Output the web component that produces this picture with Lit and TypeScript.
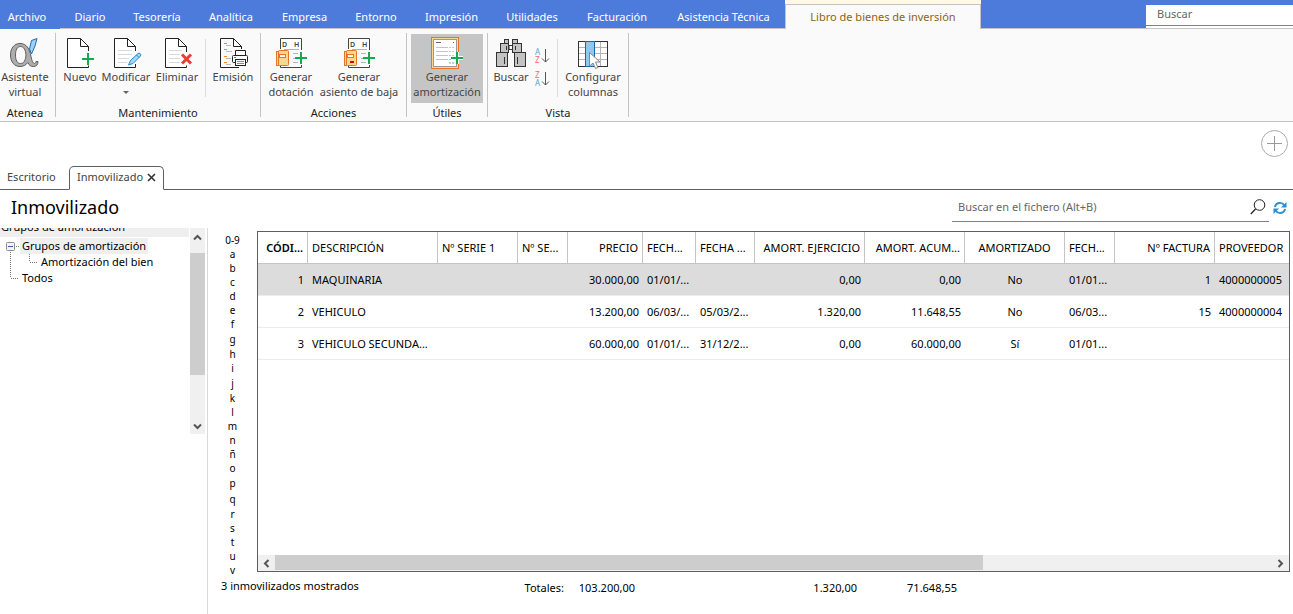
import { LitElement, html, css, svg, nothing } from "lit";
import { customElement, state } from "lit/decorators.js";
import { classMap } from "lit/directives/class-map.js";
import { styleMap } from "lit/directives/style-map.js";

const plus = (x: number, y: number, halo = false) => svg`
  ${halo ? svg`<path d="M${x - 6} ${y}H${x + 6}M${x} ${y - 6}V${y + 6}" stroke="#fafafa" stroke-width="4"/>` : nothing}
  <path d="M${x - 6} ${y}H${x + 6}M${x} ${y - 6}V${y + 6}" stroke="#16a951" stroke-width="2"/>`;

const ledger = svg`
  <path d="M7.5 13V2.5H28.5V14M28.5 29V31.5H7.5V30" stroke="#444" fill="#fff"/>
  <path d="M11 13.5H26" stroke="#b5b5b5"/>
  <path d="M20 17.5H25M20 22.5H22M20 26.5H25" stroke="#b5b5b5"/>
  <text x="9" y="11" class="dh">D</text><text x="21" y="11" class="dh">H</text>
  <rect x="3.5" y="15.5" width="2" height="14" fill="#fbd88f" stroke="#e77325"/>
  <rect x="5.5" y="14.5" width="10" height="15" rx="1" fill="#fbd88f" stroke="#e77325"/>
  <rect x="6.5" y="18.5" width="6" height="3" fill="#fff" stroke="#e77325"/>`;

const icons: Record<string, unknown> = {
  alpha: svg`
    <path d="M24.500 4.500L30 2.500L28 10L24.500 18L22.500 13Z" fill="#9fd0f5" stroke="#1c6fb5"/>
    <path fill-rule="evenodd" d="M13 7.500C7 7.500 3.500 12.500 3.500 19C3.500 26 7.500 30.500 13 30.500C16.500 30.500 19 29 20.800 26.500C22 29.500 24 30.500 26.500 30.500C29.500 30.500 31 28.500 31 25.500L29 25.500C28.800 27 28.300 27.500 27.500 27.500C25.800 27.500 25 25 24 20.500C22.500 12.500 19.500 7.500 13 7.500ZM13.500 10.500C17 10.500 18.500 14 19 19C18.500 24.500 17 27.500 13.500 27.500C10 27.500 8.500 24 8.500 19C8.500 14 10 10.500 13.500 10.500Z" fill="#adadad" stroke="#5e5e5e"/>`,
  nuevo: svg`
    <path d="M26.500 15V10.500L18.500 2.500H5.500V31.500H26.500V29.500" stroke="#222" fill="#fff"/>
    <path d="M18.500 2.500V10.500H26.500" stroke="#222" fill="none"/>${plus(26, 23)}`,
  modificar: svg`
    <path d="M27.500 15V10.500L19.500 2.500H6.500V31.500H27.500V28" stroke="#222" fill="#fff"/>
    <path d="M19.500 2.500V10.500H27.500" stroke="#222" fill="none"/>
    <path d="M10 14.500H24M10 18.500H24M10 22.500H21M10 26.500H19" stroke="#d9d9d9"/>
    <path d="M20.500 29L22.500 24.500L30 17.500C31.500 16.500 33.500 18 32.500 20L25 27.500Z" fill="#a9d6f5" stroke="#2787c9"/>
    <path d="M28.500 19L31 21.500" stroke="#2787c9"/>`,
  eliminar: svg`
    <path d="M27.500 16V10.500L19.500 2.500H6.500V31.500H27.500V29.500" stroke="#222" fill="#fff"/>
    <path d="M19.500 2.500V10.500H27.500" stroke="#222" fill="none"/>
    <path d="M10 14.500H23M10 18.500H21M10 22.500H21M10 26.500H21" stroke="#d9d9d9"/>
    <path d="M23 18.500L32 27.500M32 18.500L23 27.500" stroke="#ee3b35" stroke-width="3"/>`,
  emision: svg`
    <path d="M26.500 13V10.500L18.500 2.500H5.500V31.500H24" stroke="#222" fill="none"/>
    <path d="M18.500 2.500V10.500H26.500" stroke="#222" fill="none"/>
    <path d="M9 7.500H12M9 13.500H12M9 20.500H12M9 26.500H12" stroke="#f08a1c"/>
    <path d="M11 9.500H16M11 15.500H17M11 22.500H16M11 28.500H16" stroke="#bbb"/>
    <path d="M20.500 19.500V14.500H30.500V19.500" stroke="#222" fill="#fff"/>
    <rect x="17.500" y="19.500" width="15" height="7" rx="1" fill="#fff" stroke="#222"/>
    <path d="M19 21.500H21" stroke="#2787c9"/>
    <rect x="20.500" y="23.500" width="10" height="6" fill="#fff" stroke="#222"/>
    <path d="M22 25.500H29M22 27.500H29" stroke="#888"/>`,
  dotacion: svg`${ledger}${plus(28, 22)}`,
  baja: svg`${ledger}<rect x="9" y="25" width="4" height="2" fill="#d80000"/>${plus(28, 22)}`,
  amortizacion: svg`
    <rect x="2.500" y="1.500" width="27" height="31" fill="#fbd88f" stroke="#e77325"/>
    <rect x="4.500" y="3.500" width="23" height="27" fill="#fff" stroke="#999"/>
    <path d="M7 6.500H12M24 6.500H25" stroke="#666"/>
    <path d="M7 11.500H25M7 15.500H25M7 19.500H25M7 23.500H22" stroke="#c4c4c4" stroke-dasharray="12 1 2 1"/>
    <path d="M20 27H22M23 27H25" stroke="#ccc" stroke-width="2"/>${plus(28, 22, true)}`,
  buscar: svg`
    <g fill="#c3c3c3" stroke="#333">
      <rect x="16" y="9.500" width="4" height="4" fill="#fafafa"/>
      <rect x="11.500" y="3.500" width="4" height="4"/><rect x="19.500" y="3.500" width="5" height="4"/>
      <rect x="7.500" y="7.500" width="8" height="9"/><rect x="19.500" y="7.500" width="9" height="9"/>
      <rect x="3.500" y="16.500" width="11" height="14"/><rect x="21.500" y="16.500" width="11" height="14"/>
      <path d="M13.500 10V14M22.500 10V14M11.500 21V28M24.500 21V28"/>
    </g>`,
  columnas: svg`
    <rect x="3.500" y="5.500" width="29" height="25" fill="#fff" stroke="#333"/>
    <path d="M4 11.500H32M4 17.500H32M4 23.500H32M25.500 6V30" stroke="#b5b5b5"/>
    <rect x="10.500" y="5.500" width="9" height="25" fill="#92c8ee" stroke="#1768ad"/>
    <path d="M14.500 16.500V30L18 27L20.500 32.500L23 31.500L20.500 26H25Z" fill="#fff" stroke="#888"/>`,
};

const ribbonIcon = (name: string) =>
  html`<svg class="icon" width="36" height="33" viewBox="0 0 36 33" fill="none" aria-hidden="true">${icons[name]}</svg>`;

interface Command { icon: string; lines: string[]; width: number; menu?: boolean; active?: boolean; }
interface Group { label: string; width: number; items: (Command | "rule" | "sort")[]; }

const MENU = [
  ["Archivo", 60], ["Diario", 60], ["Tesorería", 74], ["Analítica", 74], ["Empresa", 73], ["Entorno", 70],
  ["Impresión", 81], ["Utilidades", 80], ["Facturación", 90], ["Asistencia Técnica", 123],
] as const;

const GROUPS: Group[] = [
  { label: "Atenea", width: 55, items: [{ icon: "alpha", lines: ["Asistente", "virtual"], width: 50 }] },
  {
    label: "Mantenimiento", width: 204, items: [
      { icon: "nuevo", lines: ["Nuevo"], width: 40 },
      { icon: "modificar", lines: ["Modificar"], width: 52, menu: true },
      { icon: "eliminar", lines: ["Eliminar"], width: 50 },
      "rule",
      { icon: "emision", lines: ["Emisión"], width: 46 },
    ],
  },
  {
    label: "Acciones", width: 145, items: [
      { icon: "dotacion", lines: ["Generar", "dotación"], width: 52 },
      { icon: "baja", lines: ["Generar", "asiento de baja"], width: 84 },
    ],
  },
  { label: "Útiles", width: 80, items: [{ icon: "amortizacion", lines: ["Generar", "amortización"], width: 72, active: true }] },
  {
    label: "Vista", width: 140, items: [
      { icon: "buscar", lines: ["Buscar"], width: 38 },
      "sort",
      "rule",
      { icon: "columnas", lines: ["Configurar", "columnas"], width: 62 },
    ],
  },
];

const COLUMNS: { title: string; width?: number; align: "left" | "right" | "center"; strong?: boolean }[] = [
  { title: "CÓDI...", width: 50, align: "right", strong: true },
  { title: "DESCRIPCIÓN", width: 130, align: "left" },
  { title: "Nº SERIE 1", width: 80, align: "left" },
  { title: "Nº SE...", width: 50, align: "left" },
  { title: "PRECIO", width: 75, align: "right" },
  { title: "FECH...", width: 53, align: "left" },
  { title: "FECHA ...", width: 59, align: "left" },
  { title: "AMORT. EJERCICIO", width: 110, align: "right" },
  { title: "AMORT. ACUM...", width: 100, align: "right" },
  { title: "AMORTIZADO", width: 100, align: "center" },
  { title: "FECH...", width: 50, align: "left" },
  { title: "Nº FACTURA", width: 100, align: "right" },
  { title: "PROVEEDOR", align: "left" },
];

const ROWS = [
  ["1", "MAQUINARIA", "", "", "30.000,00", "01/01/...", "", "0,00", "0,00", "No", "01/01...", "1", "4000000005"],
  ["2", "VEHICULO", "", "", "13.200,00", "06/03/...", "05/03/2...", "1.320,00", "11.648,55", "No", "06/03...", "15", "4000000004"],
  ["3", "VEHICULO SECUNDA...", "", "", "60.000,00", "01/01/...", "31/12/2...", "0,00", "60.000,00", "Sí", "01/01...", "", ""],
];

const INDEX = ["0-9", ..."abcdefghijklmnñopqrstuv"];

@customElement("app-root")
export class AppRoot extends LitElement {
  @state() private selected = 0;

  static styles = css`
    :host { display: flex; flex-direction: column; height: 100vh; overflow: hidden; background: #fff; color: #000; font: 11px/16px "Noto Sans", "Open Sans", sans-serif; }
    * { box-sizing: border-box; }
    button, input { font: inherit; color: inherit; border: 0; padding: 0; margin: 0; background: none; border-radius: 0; outline: 0; }
    button { cursor: pointer; white-space: nowrap; }
    svg { display: block; flex: none; overflow: visible; }

    .menubar { flex: none; display: flex; height: 29px; background: #4d7bdb; }
    .menu { color: #fff; border-bottom: 1px solid #c4c4c4; padding-top: 5px; }
    .menu:first-child { border-bottom-color: #4d7bdb; padding-right: 6px; }
    .context { width: 196px; border-top: 4px solid #fff8e4; background: #fafafa; display: flex; }
    .context button { flex: 1; border: 1px solid #c4c4c4; border-bottom: 0; color: #8a6414; }
    .fill { flex: 1; border-bottom: 1px solid #c4c4c4; }
    .global { width: 147px; margin-top: 5px; background: #fff; border-bottom: 1px solid #c4c4c4; }
    .global input { display: block; width: 100%; height: 21px; border-bottom: 1px solid #808080; padding: 0 11px 3px; }
    input::placeholder { color: #666; opacity: 1; }

    .ribbon { flex: none; display: flex; height: 93px; background: #fafafa; border-bottom: 1px solid #c4c4c4; color: #444; }
    .group { display: flex; flex-direction: column; padding: 5px 4px 0; }
    .group:first-child { padding: 5px 5px 0 0; }
    .group h2 { margin: 0; font: inherit; line-height: 17px; text-align: center; color: #222; }
    .commands { display: flex; height: 71px; }
    .edge { width: 1px; margin: 4px 0; background: #c4c4c4; }
    .rule { width: 1px; margin: 5px 4px 7px 3px; background: #dcdcdc; }
    .command { display: flex; flex-direction: column; align-items: center; height: 69px; padding-top: 2px; line-height: 15px; }
    .command.active { background: #c5c5c5; }
    .drop { margin-top: 7px; }
    .dh { font: 600 7px "Noto Sans", sans-serif; fill: #444; stroke: none; }
    .sort { width: 24px; display: flex; flex-direction: column; align-items: center; gap: 7px; padding-top: 14px; }
    .sort text { font: 8px "Noto Sans", sans-serif; }

    .tabs { flex: none; display: flex; height: 68px; padding-right: 5px; border-bottom: 1px solid #5f5f5f; align-items: flex-end; color: #444; }
    .tab { height: 24px; padding: 0 7px 2px; margin-bottom: -1px; display: flex; align-items: center; gap: 4px; }
    .tab.home { width: 69px; }
    .tab.current { width: 95px; border: 1px solid #5f5f5f; border-bottom-color: #fff; border-radius: 5px 5px 0 0; background: #fff; }
    .add { margin: 8px 0 0 auto; align-self: flex-start; }

    .heading { flex: none; display: flex; height: 38px; padding: 0 6px 0 11px; }
    .heading h1 { flex: 1; margin: 0; font: 18px/34px "Noto Sans", sans-serif; }
    .finder { width: 317px; height: 32px; padding: 2px 3px 0 6px; border-bottom: 1px solid #808080; display: flex; align-items: center; }
    .finder input { flex: 1; min-width: 0; height: 28px; }
    .refresh { margin: 11px 0 0 4px; align-self: flex-start; }

    .body { flex: 1; min-height: 0; display: flex; }
    .side { width: 208px; border-right: 1px solid #d9d9d9; padding-right: 2px; display: flex; align-items: flex-start; }
    .tree { flex: 1; }
    .caption { height: 9px; margin-right: 1px; padding: 0 1px 2px; background: #efefef; overflow: hidden; display: flex; align-items: flex-end; }
    .tree ul { list-style: none; margin: 1px 0 0; padding: 0; }
    .tree li { display: flex; }
    .node { padding: 0 2px; }
    .node.on { background: #efefef; }
    .vbar { width: 15px; height: 206px; background: #f0f0f0; display: flex; flex-direction: column; align-items: center; }
    .vbar button { display: grid; place-items: center; height: 25px; padding-bottom: 6px; }
    .vbar button:last-child { padding: 10px 0 0; margin-top: auto; }
    .vthumb { width: 15px; height: 122px; background: #cdcdcd; }

    .content { flex: 1; min-width: 0; display: flex; flex-direction: column; padding: 3px 3px 0 0; }
    .upper { flex: 1; min-height: 0; display: flex; overflow: hidden; }
    .index { width: 49px; padding-top: 2px; display: flex; flex-direction: column; font-size: 10px; }
    .index button { flex: none; height: 14px; line-height: 14px; }
    .index .tall { height: 16px; line-height: 16px; }
    .frame { flex: 1; min-width: 0; margin-bottom: 2px; border: 1px solid #5f5f5f; display: flex; flex-direction: column; justify-content: space-between; overflow: hidden; }
    table { width: 100%; table-layout: fixed; border-collapse: separate; border-spacing: 0; }
    th, td { height: 32px; padding: 0 4px; white-space: nowrap; overflow: hidden; text-align: left; }
    th { font-weight: 400; border-right: 1px solid #c4c4c4; border-bottom: 1px solid #c4c4c4; }
    th:last-child { border-right: 0; }
    td { border-bottom: 1px solid #ececec; }
    .strong { font-weight: 600; }
    .right { text-align: right; }
    .center { text-align: center; }
    .picked td { background: #dcdcdc; }
    .hbar { display: flex; height: 16px; background: #f0f0f0; justify-content: space-between; }
    .hbar button { width: 17px; display: grid; place-items: center; }
    .htrack { flex: 1; }
    .hthumb { width: 71%; height: 15px; background: #cdcdcd; }

    .totals { flex: none; height: 40px; padding: 4px 0 0 13px; display: grid; grid-template-columns: 303px 40px 71px 222px 100px; line-height: 20px; text-align: right; }
    .count { text-align: left; line-height: 16px; }
  `;

  private command(c: Command) {
    return html`<button class=${classMap({ command: true, active: !!c.active })} style=${styleMap({ width: `${c.width}px` })}>
      ${ribbonIcon(c.icon)}
      ${c.lines.map((l) => html`<span>${l}</span>`)}
      ${c.menu ? html`<svg class="drop" width="6" height="4" viewBox="0 0 6 4"><path d="M0 0H6L3 3Z" fill="#666"/></svg>` : nothing}
    </button>`;
  }

  private sortButtons() {
    const one = (label: string, a: string, b: string) => {
      const color = (l: string) => (l === "A" ? "#4ea6dc" : "#ee6b6b");
      return html`<button aria-label=${label}><svg width="16" height="16" viewBox="0 0 16 16">
        <text x="1" y="7" fill=${color(a)}>${a}</text><text x="1" y="15" fill=${color(b)}>${b}</text>
        <path d="M11.500 1V14M8 10.500L11.500 14L15 10.500" fill="none" stroke="#555"/></svg></button>`;
    };
    return html`<div class="sort">${one("Orden ascendente", "A", "Z")}${one("Orden descendente", "Z", "A")}</div>`;
  }

  private chevron(d: string) {
    return html`<svg width="9" height="9" viewBox="0 0 9 9"><path d=${d} fill="none" stroke="#555" stroke-width="2"/></svg>`;
  }

  render() {
    return html`
      <nav class="menubar">
        ${MENU.map(([label, width]) => html`<button class="menu" style=${styleMap({ width: `${width}px` })}>${label}</button>`)}
        <div class="context"><button>Libro de bienes de inversión</button></div>
        <div class="fill"></div>
        <div class="global"><input type="search" placeholder="Buscar" aria-label="Buscar" /></div>
      </nav>

      <div class="ribbon">
        ${GROUPS.map((g) => html`
          <section class="group" style=${styleMap({ width: `${g.width}px` })}>
            <div class="commands">
              ${g.items.map((i) => i === "rule" ? html`<span class="rule"></span>` : i === "sort" ? this.sortButtons() : this.command(i))}
            </div>
            <h2>${g.label}</h2>
          </section><span class="edge"></span>`)}
      </div>

      <div class="tabs">
        <button class="tab home">Escritorio</button>
        <button class="tab current">Inmovilizado
          <svg width="9" height="9" viewBox="0 0 9 9"><path d="M1 1L8 8M8 1L1 8" stroke="#333" stroke-width="1.600"/></svg>
        </button>
        <button class="add" aria-label="Añadir">
          <svg width="27" height="27" viewBox="0 0 27 27"><circle cx="13.500" cy="13.500" r="13" fill="none" stroke="#aaa"/><path d="M6 13.500H21M13.500 6V21" stroke="#999"/></svg>
        </button>
      </div>

      <header class="heading">
        <h1>Inmovilizado</h1>
        <div class="finder">
          <input type="text" placeholder="Buscar en el fichero (Alt+B)" aria-label="Buscar en el fichero" />
          <button aria-label="Buscar"><svg width="16" height="16" viewBox="0 0 16 16"><circle cx="9.500" cy="6" r="5.300" fill="none" stroke="#222"/><path d="M5.500 10L0.800 15" stroke="#222" stroke-width="1.300"/></svg></button>
        </div>
        <button class="refresh" aria-label="Actualizar">
          <svg width="14" height="14" viewBox="0 0 15 15"><g fill="none" stroke="#2a8fd4" stroke-width="2"><path d="M2 6.500C3 1.500 9.500 0.500 12 4.500M13 8.500C12 13.500 5.500 14.500 3 10.500"/></g><path d="M14.500 1V7H8.500ZM0.500 14V8H6.500Z" fill="#2a8fd4"/></svg>
        </button>
      </header>

      <div class="body">
        <aside class="side">
          <div class="tree">
            <div class="caption">Grupos de amortización</div>
            <ul>
              <li><svg width="20" height="16" viewBox="0 0 20 16"><rect x="6.500" y="4.500" width="8" height="8" rx="1" fill="#f3f3f3" stroke="#8e8e8e"/><path d="M8 8.500H13" stroke="#3b5aa8"/><path d="M16 8.500H19M10.500 14V16" stroke="#777" stroke-dasharray="1 1"/></svg><span class="node on">Grupos de amortización</span></li>
              <li><svg width="39" height="16" viewBox="0 0 39 16"><path d="M10.500 0V16M29.500 0V8M30 8.500H38" fill="none" stroke="#777" stroke-dasharray="1 1"/></svg><span class="node">Amortización del bien</span></li>
              <li><svg width="20" height="16" viewBox="0 0 20 16"><path d="M10.500 0V8M11 8.500H19" fill="none" stroke="#777" stroke-dasharray="1 1"/></svg><span class="node">Todos</span></li>
            </ul>
          </div>
          <div class="vbar">
            <button aria-label="Subir">${this.chevron("M1 6.500L4.500 3L8 6.500")}</button>
            <div class="vthumb"></div>
            <button aria-label="Bajar">${this.chevron("M1 2.500L4.500 6L8 2.500")}</button>
          </div>
        </aside>

        <main class="content">
          <div class="upper">
            <div class="index">
              ${INDEX.map((l) => html`<button class=${classMap({ tall: "gjpq".includes(l) })}>${l}</button>`)}
            </div>
            <div class="frame">
              <table>
                <colgroup>${COLUMNS.map((c) => html`<col style=${styleMap(c.width ? { width: `${c.width}px` } : {})} />`)}</colgroup>
                <thead><tr>${COLUMNS.map((c) => html`<th scope="col" class=${classMap({ [c.align]: true, strong: !!c.strong })}>${c.title}</th>`)}</tr></thead>
                <tbody>
                  ${ROWS.map((r, i) => html`<tr class=${classMap({ picked: i === this.selected })} @click=${() => (this.selected = i)}>
                    ${r.map((v, j) => html`<td class=${COLUMNS[j].align}>${v}</td>`)}</tr>`)}
                </tbody>
              </table>
              <div class="hbar">
                <button aria-label="Izquierda">${this.chevron("M6.500 1L3 4.500L6.500 8")}</button>
                <div class="htrack"><div class="hthumb"></div></div>
                <button aria-label="Derecha">${this.chevron("M2.500 1L6 4.500L2.500 8")}</button>
              </div>
            </div>
          </div>
          <footer class="totals">
            <span class="count">3 inmovilizados mostrados</span>
            <span>Totales:</span><span>103.200,00</span><span>1.320,00</span><span>71.648,55</span>
          </footer>
        </main>
      </div>
    `;
  }
}
